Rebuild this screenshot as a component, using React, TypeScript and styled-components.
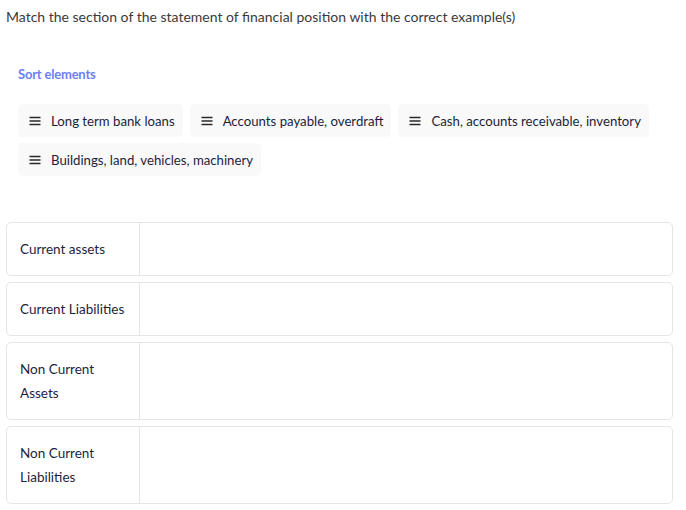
import React from 'react'
import styled, { createGlobalStyle } from 'styled-components'

const GlobalStyle = createGlobalStyle`
  body {
    margin: 0;
    background: #ffffff;
    font-family: Lato, "Open Sans", sans-serif;
    color: #333333;
  }
`

const Page = styled.div`
  padding: 7px 13px 0 6px;
`

const Question = styled.p`
  margin: 0;
  font-size: 14px;
  line-height: 20px;
  color: #3a3a3a;
`

const Pool = styled.section`
  padding: 0 0 0 12px;
  margin-top: 38px;
`

const PoolTitle = styled.h3`
  margin: 0;
  font-size: 13px;
  line-height: 18px;
  font-weight: 700;
  color: #6d7ff7;
  letter-spacing: -0.2px;
`

const Chips = styled.div`
  display: flex;
  flex-wrap: wrap;
  gap: 6px 7px;
  margin-top: 21px;
  max-width: 640px;
`

const Chip = styled.div`
  display: flex;
  align-items: center;
  gap: 9px;
  height: 33px;
  padding: 0 8px 0 10px;
  background: #f9f9f9;
  border-radius: 5px;
  font-size: 13.2px;
  color: #1e1e3c;
  cursor: grab;
`

const Handle = styled.svg`
  width: 14px;
  height: 14px;
  flex-shrink: 0;
`

const Table = styled.div`
  display: flex;
  flex-direction: column;
  gap: 6px;
  margin-top: 46px;
`

const Row = styled.div<{ $tall?: boolean }>`
  display: grid;
  grid-template-columns: 133px 1fr;
  min-height: ${p => (p.$tall ? 78 : 54)}px;
  border: 1px solid #e3e5ea;
  border-radius: 5px;
  box-sizing: border-box;
`

const Label = styled.div`
  display: flex;
  align-items: center;
  padding: 0 8px 0 13px;
  border-right: 1px solid #e3e5ea;
  font-size: 13.5px;
  line-height: 24px;
  color: #1e1e3c;
`

const Drop = styled.div`
  min-height: 100%;
`

const items = [
  'Long term bank loans',
  'Accounts payable, overdraft',
  'Cash, accounts receivable, inventory',
  'Buildings, land, vehicles, machinery',
]

const rows = [
  { label: ['Current assets'] },
  { label: ['Current Liabilities'] },
  { label: ['Non Current', 'Assets'], tall: true },
  { label: ['Non Current', 'Liabilities'], tall: true },
]

const DragIcon = () => (
  <Handle viewBox="0 0 14 14">
    <path d="M1.5 3.5h11M1.5 7h11M1.5 10.5h11" stroke="#2a2a2a" strokeWidth="1.4" fill="none" />
  </Handle>
)

export default function App() {
  return (
    <>
      <GlobalStyle />
      <Page>
        <Question>Match the section of the statement of financial position with the correct example(s)</Question>
        <Pool>
          <PoolTitle>Sort elements</PoolTitle>
          <Chips>
            {items.map(item => (
              <Chip key={item}>
                <DragIcon />
                {item}
              </Chip>
            ))}
          </Chips>
        </Pool>
        <Table>
          {rows.map(r => (
            <Row key={r.label.join(' ')} $tall={r.tall}>
              <Label>
                <span>
                  {r.label.map((line, i) => (
                    <React.Fragment key={line}>
                      {i > 0 && <br />}
                      {line}
                    </React.Fragment>
                  ))}
                </span>
              </Label>
              <Drop />
            </Row>
          ))}
        </Table>
      </Page>
    </>
  )
}
